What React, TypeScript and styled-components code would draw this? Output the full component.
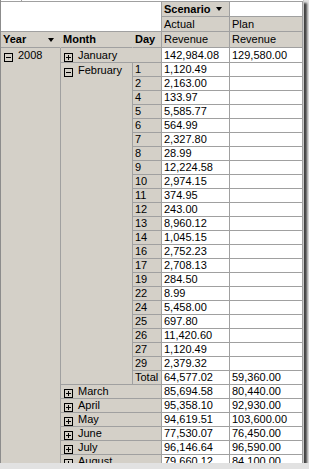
import React from "react";
import styled, { createGlobalStyle } from "styled-components";

const GlobalStyle = createGlobalStyle`
    html, body {
        margin: 0;
        padding: 0;
        background: #e2e2e2;
    }
    body {
        font-family: "Liberation Sans", Arial, sans-serif;
        font-size: 11px;
        color: #000;
    }
`;

const GRID = "#a0a0a0";
const FACE = "#d4d0c8";

type Place = { $col: string; $row: string };

const Frame = styled.div`
    width: 304px;
    height: 463px;
    overflow: hidden;
    background: #fff;
    border-left: 1px solid #8c8c8c;
    border-right: 1px solid #c8c8c8;
    box-sizing: border-box;
    box-shadow: 3px 3px 2px rgba(0, 0, 0, 0.7);
`;

const Pivot = styled.div`
    display: grid;
    grid-template-columns: 60px 72px 29px 68px 73px;
    grid-template-rows: 2px 15px 15px 16px 15px;
    grid-auto-rows: 14px;
`;

const TopStrip = styled.div`
    grid-column: 1 / -1;
    grid-row: 1;
    display: flex;
    border-bottom: 1px solid ${GRID};
    box-sizing: border-box;
`;

const StripSeg = styled.div<{ $w?: number }>`
    flex: ${({ $w }) => ($w ? `0 0 ${$w}px` : "1")};
    border-right: 1px solid ${({ $w }) => ($w ? GRID : "transparent")};
    box-sizing: border-box;
`;

const Cell = styled.div<Place & { $face?: boolean; $bold?: boolean; $noRight?: boolean }>`
    grid-column: ${({ $col }) => $col};
    grid-row: ${({ $row }) => $row};
    position: relative;
    box-sizing: border-box;
    background: ${({ $face }) => ($face ? FACE : "#fff")};
    border-bottom: 1px solid ${GRID};
    border-right: 1px solid ${({ $noRight }) => ($noRight ? "transparent" : GRID)};
    display: flex;
    align-items: ${({ $row }) => ($row.includes("span") ? "flex-start" : "center")};
    padding-left: 2px;
    font-weight: ${({ $bold }) => ($bold ? 700 : 400)};
    white-space: nowrap;
    overflow: hidden;
    line-height: 13px;
`;

const Tick = styled.span`
    position: absolute;
    right: -1px;
    top: 4px;
    height: 8px;
    width: 1px;
    background: #808080;
`;

const HeaderLabel = styled.span`
    flex: 1;
`;

const DropArrow = styled.span`
    width: 0;
    height: 0;
    border-left: 3.5px solid transparent;
    border-right: 3.5px solid transparent;
    border-top: 4px solid #000;
    margin-right: 6px;
`;

const Toggle = styled.span<{ $open?: boolean }>`
    position: relative;
    flex: 0 0 auto;
    width: 9px;
    height: 9px;
    border: 1px solid #000;
    box-sizing: border-box;
    margin: 0 5px 0 1px;
    top: 2px;

    &::before {
        content: "";
        position: absolute;
        left: 1px;
        top: 3px;
        width: 5px;
        height: 1px;
        background: #000;
    }

    &::after {
        content: "";
        position: absolute;
        left: 3px;
        top: 1px;
        width: 1px;
        height: 5px;
        background: #000;
        display: ${({ $open }) => ($open ? "none" : "block")};
    }
`;

const Spanned = styled.div`
    display: flex;
    align-items: center;
    height: 14px;
`;

const days: [string, string][] = [
    ["1", "1,120.49"],
    ["2", "2,163.00"],
    ["4", "133.97"],
    ["5", "5,585.77"],
    ["6", "564.99"],
    ["7", "2,327.80"],
    ["8", "28.99"],
    ["9", "12,224.58"],
    ["10", "2,974.15"],
    ["11", "374.95"],
    ["12", "243.00"],
    ["13", "8,960.12"],
    ["14", "1,045.15"],
    ["16", "2,752.23"],
    ["17", "2,708.13"],
    ["19", "284.50"],
    ["22", "8.99"],
    ["24", "5,458.00"],
    ["25", "697.80"],
    ["26", "11,420.60"],
    ["27", "1,120.49"],
    ["29", "2,379.32"],
];

const months: [string, string, string][] = [
    ["March", "85,694.58", "80,440.00"],
    ["April", "95,358.10", "92,930.00"],
    ["May", "94,619.51", "103,600.00"],
    ["June", "77,530.07", "76,450.00"],
    ["July", "96,146.64", "96,590.00"],
    ["August", "79,660.12", "84,100.00"],
];

export default function App() {
    const febStart = 6;
    const totalRow = febStart + days.length;
    const monthStart = totalRow + 1;
    const lastRow = monthStart + months.length;

    return (
        <>
            <GlobalStyle />
            <Frame>
                <Pivot>
                    <TopStrip>
                        <StripSeg $w={21} />
                        <StripSeg />
                    </TopStrip>

                    <Cell $col="1 / 4" $row="2 / span 2" />
                    <Cell $col="4" $row="2" $face $bold>
                        <span>Scenario</span>
                        <DropArrow style={{ marginLeft: 6 }} />
                    </Cell>
                    <Cell $col="5" $row="2" />
                    <Cell $col="4" $row="3" $face>Actual</Cell>
                    <Cell $col="5" $row="3" $face>Plan</Cell>

                    <Cell $col="1" $row="4" $face $bold $noRight>
                        <HeaderLabel>Year</HeaderLabel>
                        <DropArrow />
                        <Tick />
                    </Cell>
                    <Cell $col="2" $row="4" $face $bold $noRight>
                        Month
                        <Tick />
                    </Cell>
                    <Cell $col="3" $row="4" $face $bold>Day</Cell>
                    <Cell $col="4" $row="4" $face>Revenue</Cell>
                    <Cell $col="5" $row="4" $face>Revenue</Cell>

                    <Cell $col="1" $row={`5 / span ${lastRow - 5}`} $face>
                        <Spanned>
                            <Toggle $open />
                            2008
                        </Spanned>
                    </Cell>

                    <Cell $col="2 / 4" $row="5" $face>
                        <Toggle />
                        January
                    </Cell>
                    <Cell $col="4" $row="5">142,984.08</Cell>
                    <Cell $col="5" $row="5">129,580.00</Cell>

                    <Cell $col="2" $row={`${febStart} / span ${days.length + 1}`} $face>
                        <Spanned>
                            <Toggle $open />
                            February
                        </Spanned>
                    </Cell>
                    {days.map(([d, v], i) => (
                        <React.Fragment key={d}>
                            <Cell $col="3" $row={`${febStart + i}`} $face>{d}</Cell>
                            <Cell $col="4" $row={`${febStart + i}`}>{v}</Cell>
                            <Cell $col="5" $row={`${febStart + i}`} />
                        </React.Fragment>
                    ))}
                    <Cell $col="3" $row={`${totalRow}`} $face>Total</Cell>
                    <Cell $col="4" $row={`${totalRow}`}>64,577.02</Cell>
                    <Cell $col="5" $row={`${totalRow}`}>59,360.00</Cell>

                    {months.map(([m, a, p], i) => (
                        <React.Fragment key={m}>
                            <Cell $col="2 / 4" $row={`${monthStart + i}`} $face>
                                <Toggle />
                                {m}
                            </Cell>
                            <Cell $col="4" $row={`${monthStart + i}`}>{a}</Cell>
                            <Cell $col="5" $row={`${monthStart + i}`}>{p}</Cell>
                        </React.Fragment>
                    ))}
                </Pivot>
            </Frame>
        </>
    );
}
